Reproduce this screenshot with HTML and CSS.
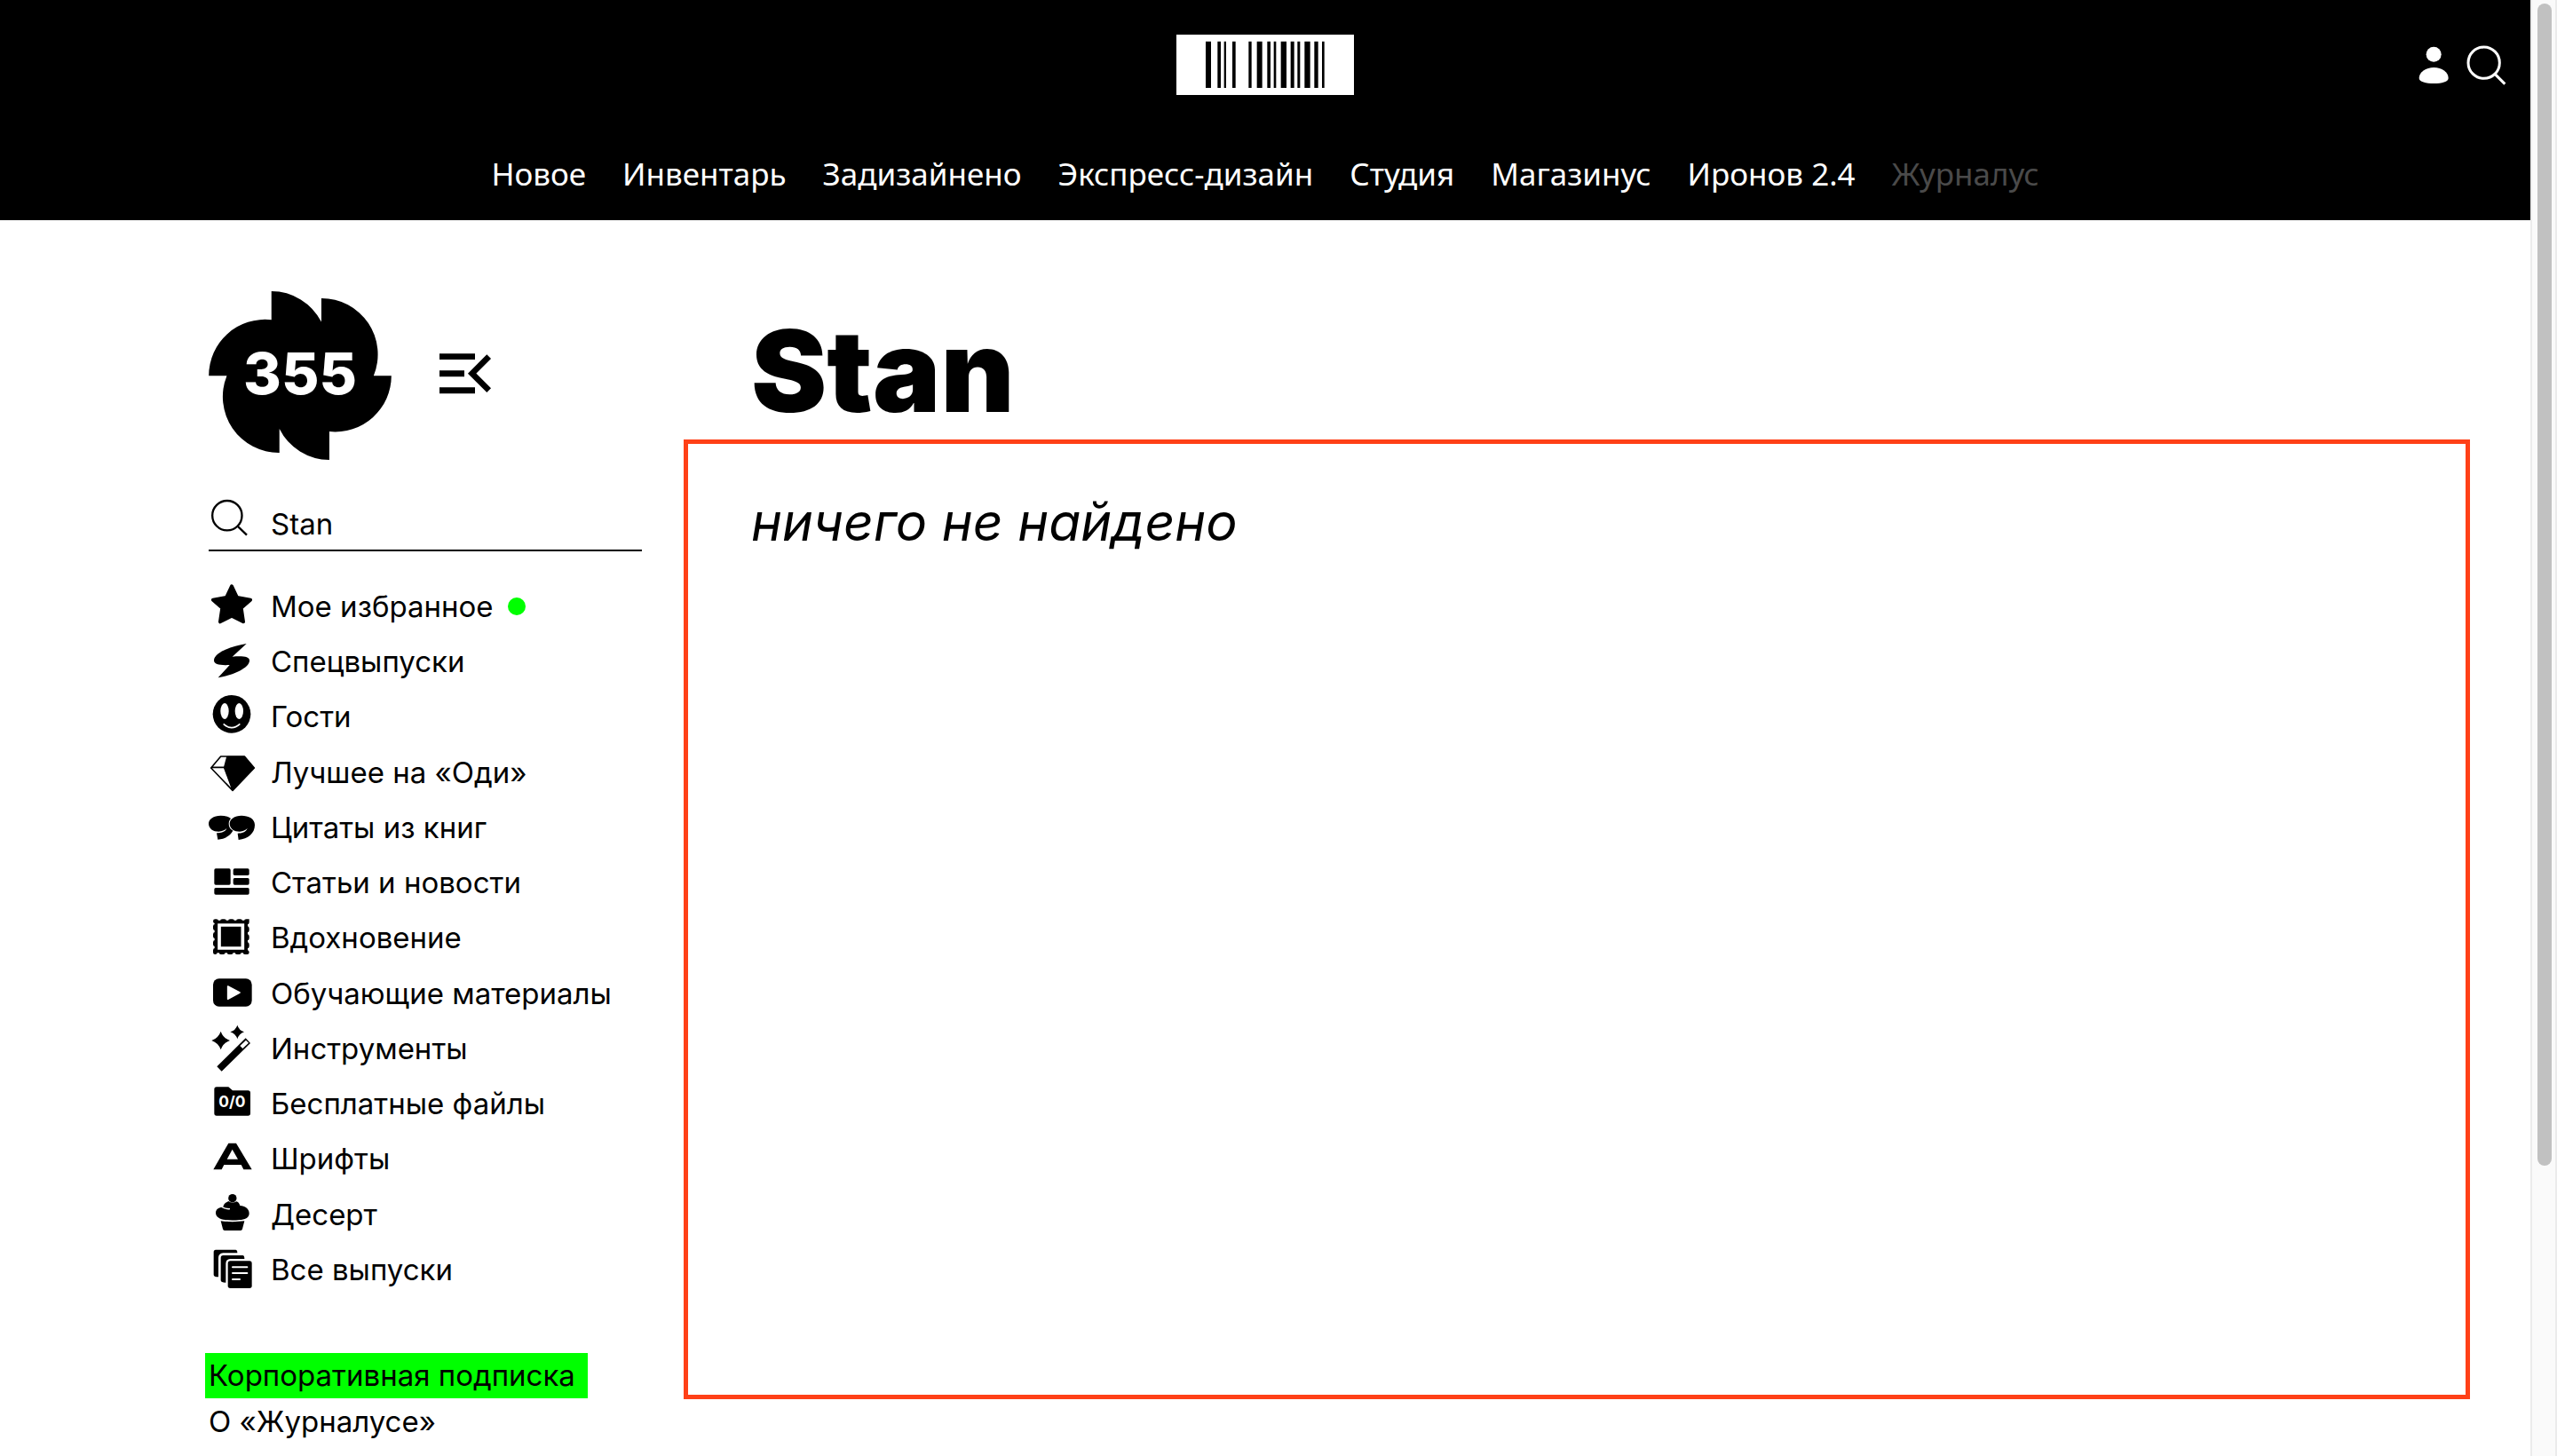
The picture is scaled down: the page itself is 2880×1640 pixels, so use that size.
FILE: index.html
```html
<!DOCTYPE html>
<html lang="ru">
<head>
<meta charset="utf-8">
<meta name="viewport" content="width=device-width, initial-scale=1">
<title>Stan — Журналус</title>
<link rel="stylesheet" href="styles.css">
</head>
<body>
<div class="page">
  <header class="header">
    <div class="header-top">
      <a class="brand" href="#" aria-label="Студия">
        <svg class="barcode" viewBox="75 57 600 204" aria-hidden="true">
          <path d="M174 80h18v157h-18zM214 80h11v157h-11zM236 80h7v157h-7zM264 80h11v157h-11zM319 80h10v157h-10zM347 80h18v157h-18zM382 80h11v157h-11zM404 80h8v157h-8zM428 80h19v157h-19zM461 80h12v157h-12zM484 80h9v157h-9zM508 80h19v157h-19zM541 80h13v157h-13zM567 80h8v157h-8z"/>
        </svg>
      </a>
      <div class="header-tools">
        <a href="#" aria-label="Профиль">
          <svg class="tool-icon" viewBox="112 147 144 144" aria-hidden="true"><circle cx="184.500" cy="184" r="25.500"/><path d="M135 264C135 243 158 228 185 228S234 243 234 264C234 276 212 282 185 282S135 276 135 264Z"/></svg>
        </a>
        <a href="#" aria-label="Поиск">
          <svg class="tool-icon" viewBox="289 147 144 144" aria-hidden="true"><g class="line" stroke-width="9"><circle cx="354" cy="212" r="53"/><path d="M392 251l33 33"/></g></svg>
        </a>
      </div>
    </div>
    <nav class="nav">
      <a href="#">Новое</a>
      <a href="#">Инвентарь</a>
      <a href="#">Задизайнено</a>
      <a href="#">Экспресс-дизайн</a>
      <a href="#">Студия</a>
      <a href="#">Магазинус</a>
      <a href="#">Иронов 2.4</a>
      <a class="current" href="#">Журналус</a>
    </nav>
  </header>

  <div class="body">
    <aside class="sidebar">
      <div class="issue">
        <a href="#" aria-label="Выпуск 355">
          <svg class="issue-logo" viewBox="45 53 618 571">
            <path d="M257 53A190 190 0 0 1 426 157V77A190 190 0 0 1 603 339H663A190 190 0 0 1 453 528V624A190 190 0 0 1 284 519V600A190 190 0 0 1 106 339H45A190 190 0 0 1 257 150Z"/>
            <text class="issue-number" x="354" y="402" text-anchor="middle">355</text>
          </svg>
        </a>
        <button class="fold" type="button" aria-label="Свернуть меню">
          <svg class="fold-icon" viewBox="825 257 180 162" aria-hidden="true"><path d="M825 264h120v20H825zM825 321h84v21h-84zM825 378h120v21H825z"/><path class="line" stroke-width="20" d="M992 274l-57 57 57 57"/></svg>
        </button>
      </div>

      <form class="search">
        <label for="query" aria-label="Поиск">
          <svg class="search-icon" viewBox="45 45 168 168" aria-hidden="true"><g class="line" stroke-width="7"><circle cx="107.500" cy="122" r="50"/><path d="M142 157l32 31"/></g></svg>
        </label>
        <input id="query" class="search-input" type="text" value="Stan">
      </form>

      <ul class="menu">
        <li><a href="#">
          <svg class="icon" viewBox="45 333 168 186" aria-hidden="true"><path stroke="#000" stroke-width="12" stroke-linejoin="round" d="M123 358L141 396 186 404 155 431 162 478 123 458 84 478 91 431 60 404 105 396Z"/></svg>
          <span>Мое избранное</span><span class="dot"></span></a></li>
        <li><a href="#">
          <svg class="icon" viewBox="45 519 168 186" aria-hidden="true"><path d="M173 552C120 560 63 583 63 609C63 622 84 626 116 624L77 667C127 659 183 634 183 609C183 596 161 593 125 596Z"/></svg>
          <span>Спецвыпуски</span></a></li>
        <li><a href="#">
          <svg class="icon" viewBox="45 18 168 186" aria-hidden="true"><circle cx="123" cy="103" r="64"/><ellipse class="cut" cx="99" cy="93" rx="14" ry="27"/><ellipse class="cut" cx="148" cy="93" rx="14" ry="27"/><path class="cut-line" stroke-width="5" d="M95 136Q122 162 151 136"/></svg>
          <span>Гости</span></a></li>
        <li><a href="#">
          <svg class="icon" viewBox="45 203 168 186" aria-hidden="true"><path class="line" stroke-width="5" stroke-linejoin="round" d="M86 242H166L199 281 126 357 53 281ZM53 279H100M108 243L98 280 126 355"/><path d="M109 241H166L200 281 126 358 98 281Z"/></svg>
          <span>Лучшее на «Оди»</span></a></li>
        <li><a href="#">
          <svg class="icon" viewBox="45 390 168 186" aria-hidden="true"><path d="M86 443C61 443 45 455 45 470C45 487 61 497 79 497C91 497 99 492 106 486C101 499 86 502 72 502L76 524C108 521 131 503 131 475C131 453 109 443 86 443Z"/><path stroke="#fff" stroke-width="6" paint-order="stroke" d="M156 443C132 443 116 455 116 470C116 487 132 497 150 497C162 497 169 492 176 486C171 499 157 503 143 503L146 525C178 522 201 503 201 475C201 453 180 443 156 443Z"/></svg>
          <span>Цитаты из книг</span></a></li>
        <li><a href="#">
          <svg class="icon" viewBox="45 579 168 186" aria-hidden="true"><rect x="64" y="625" width="55" height="55" rx="5"/><rect x="128" y="625" width="54" height="23" rx="5"/><rect x="128" y="657" width="54" height="23" rx="5"/><rect x="64" y="690" width="118" height="23" rx="5"/></svg>
          <span>Статьи и новости</span></a></li>
        <li><a href="#">
          <svg class="icon" viewBox="45 16 168 186" aria-hidden="true"><path d="M65 51H177V161H65Z"/><path class="line" stroke-width="14" stroke-linecap="round" stroke-dasharray="7 20" stroke-dashoffset="3" d="M67 54H175V159H67Z"/><path class="cut-line" stroke-width="11" d="M81 67H160V145H81Z"/></svg>
          <span>Вдохновение</span></a></li>
        <li><a href="#">
          <svg class="icon" viewBox="45 201 168 186" aria-hidden="true"><rect x="60" y="244" width="131" height="94" rx="20"/><path class="cut" stroke="#fff" stroke-width="5" stroke-linejoin="round" d="M110 270V313L150 291Z"/></svg>
          <span>Обучающие материалы</span></a></li>
        <li><a href="#">
          <svg class="icon" viewBox="45 388 168 186" aria-hidden="true"><path d="M86 423Q94 446 117 454Q94 462 86 485Q78 462 55 454Q78 446 86 423ZM142 402Q148 420 165 425Q148 431 142 449Q136 431 118 425Q136 420 142 402ZM170 446L186 463 89 558 73 542Z"/><path class="cut" d="M171 453L180 462 160 481 151 472Z"/></svg>
          <span>Инструменты</span></a></li>
        <li><a href="#">
          <svg class="icon" viewBox="45 6 168 186" aria-hidden="true"><path d="M72 43H112L126 55H178Q186 55 186 63V132Q186 140 178 140H72Q64 140 64 132V51Q64 43 72 43Z"/><text class="folder-text" x="124" y="111" text-anchor="middle">0/0</text></svg>
          <span>Бесплатные файлы</span></a></li>
        <li><a href="#">
          <svg class="icon" viewBox="45 193 168 186" aria-hidden="true"><path fill-rule="evenodd" d="M61 323L112 234H138L191 323H163L155 307H97L89 323ZM107 288H144L125 255Z"/></svg>
          <span>Шрифты</span></a></li>
        <li><a href="#">
          <svg class="icon" viewBox="45 378 168 186" aria-hidden="true"><circle cx="125.500" cy="416" r="14"/><path d="M95 442C97 433 105 430 112 426Q125 435 139 427C147 430 149 435 151 441C168 442 182 452 182 467C182 482 167 488 149 489Q125 492 101 489C83 487 69 480 69 465C69 454 79 446 92 447ZM86 493Q125 498 166 493L159 520Q158 525 153 525H99Q94 525 93 520Z"/><path class="cut-line" stroke-width="4" d="M91 446Q102 453 117 452"/></svg>
          <span>Десерт</span></a></li>
        <li><a href="#">
          <svg class="icon" viewBox="45 564 168 186" aria-hidden="true"><path d="M69 590H136Q142 590 142 601H94Q78 603 78 617V682Q62 682 62 674V598Q62 590 69 590ZM94 609H160Q166 609 166 621H118Q103 622 103 637V701Q86 701 86 693V617Q86 609 94 609Z"/><rect x="110" y="628" width="81" height="92" rx="8"/><path class="cut-line" stroke-width="6" stroke-linecap="round" d="M126 649H175M126 669H175M126 690H150"/></svg>
          <span>Все выпуски</span></a></li>
      </ul>

      <div class="links">
        <a class="highlight" href="#">Корпоративная подписка</a>
        <a href="#">О «Журналусе»</a>
      </div>
    </aside>

    <main class="content">
      <h1 class="title">Stan</h1>
      <section class="results">
        <p class="empty">ничего не найдено</p>
      </section>
    </main>
  </div>
</div>
<div class="scrollbar" aria-hidden="true"><div class="thumb"></div></div>
</body>
</html>
```
FILE: styles.css
```css
* {
  box-sizing: border-box;
}

body {
  margin: 0;
  min-height: 100vh;
  display: flex;
  background: #fff;
  color: #000;
  font-family: Inter, "Liberation Sans", sans-serif;
  font-size: 33px;
  line-height: 42px;
}

a {
  color: inherit;
  text-decoration: none;
}

svg {
  display: block;
}

.line {
  fill: none;
  stroke: currentColor;
}

.cut {
  fill: #fff;
}

.cut-line {
  fill: none;
  stroke: #fff;
}

.page {
  flex: 1;
  min-width: 0;
  display: flex;
  flex-direction: column;
}

/* Header */

.header {
  padding: 39px 26px 20px;
  background: #000;
  color: #fff;
}

.header-top {
  display: grid;
  grid-template-columns: 1fr auto 1fr;
  align-items: center;
}

.brand {
  grid-column: 2;
  background: #fff;
  color: #000;
}

.barcode {
  width: 200px;
  height: 68px;
}

.header-tools {
  display: flex;
  justify-content: flex-end;
  gap: 11px;
}

.tool-icon {
  width: 48px;
  height: 48px;
  fill: currentColor;
}

.nav {
  display: flex;
  justify-content: center;
  gap: 41px;
  margin-top: 57px;
  font-family: "Noto Sans", sans-serif;
  font-size: 35px;
  line-height: 64px;
}

.nav .current {
  color: #4a4a4a;
}

/* Page body */

.body {
  flex: 1;
  display: grid;
  grid-template-columns: 488px minmax(0, 1fr);
  gap: 47px;
  padding: 80px 68px 0 235px;
}

.issue {
  display: flex;
  align-items: center;
  gap: 54px;
}

.issue-logo {
  width: 206px;
  height: 190px;
}

.issue-number {
  fill: #fff;
  font-size: 196px;
  font-weight: 800;
}

.fold {
  padding: 0;
  border: 0;
  background: none;
  color: inherit;
}

.fold-icon {
  width: 60px;
  height: 54px;
}

.search {
  display: grid;
  grid-template-columns: 70px 1fr;
  align-items: end;
  margin-top: 37px;
  padding-bottom: 8px;
  border-bottom: 2px solid #000;
}

.search-icon {
  width: 56px;
  height: 56px;
}

.search-input {
  width: 100%;
  height: 42px;
  padding: 0;
  border: 0;
  outline: 0;
  background: none;
  color: inherit;
  font: inherit;
}

.menu {
  display: grid;
  grid-auto-rows: 1fr;
  height: 809px;
  margin: 31px 0 0;
  padding: 0;
  list-style: none;
}

.menu a {
  display: flex;
  align-items: center;
}

.icon {
  width: 56px;
  height: 62px;
  margin-right: 14px;
}

.folder-text {
  fill: #fff;
  font-size: 52px;
  font-weight: 700;
}

.dot {
  width: 20px;
  height: 20px;
  margin-left: 16px;
  border-radius: 50%;
  background: #0f0;
}

.links {
  display: flex;
  flex-direction: column;
  align-items: flex-start;
  gap: 1px;
  margin-top: 63px;
  line-height: 51px;
}

.highlight {
  margin-left: -4px;
  padding: 0 14px 0 4px;
  background: #0f0;
}

.content {
  display: flex;
  flex-direction: column;
  padding: 26px 0 64px;
}

.title {
  margin: 0 0 13px;
  padding-left: 76px;
  font-size: 128px;
  line-height: 128px;
  font-weight: 900;
}

.results {
  flex: 1;
  padding: 58px 71px;
  border: 5px solid #ff4017;
}

.empty {
  margin: 0;
  font-size: 59px;
  line-height: 60px;
  font-style: italic;
}

/* Scroll track at the window's edge */

.scrollbar {
  width: 30px;
  padding: 4px 4px 0 6px;
  border: solid #ebebeb;
  border-width: 0 2px;
  background: #fafafa;
}

.thumb {
  width: 16px;
  height: 80%;
  border-radius: 8px;
  background: #c1c1c1;
}
```
